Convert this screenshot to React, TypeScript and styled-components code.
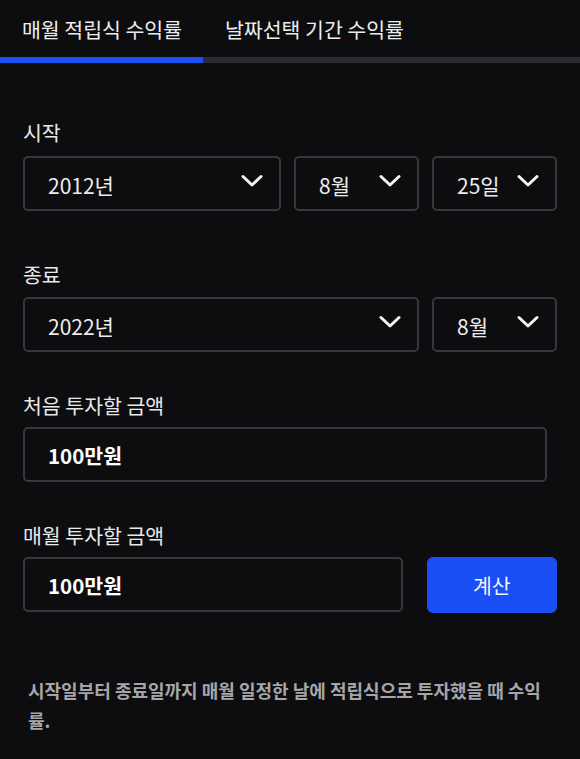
import React from 'react';
import styled, { createGlobalStyle } from 'styled-components';

const GlobalStyle = createGlobalStyle`
  html, body {
    margin: 0;
    padding: 0;
    background: #0d0d10;
  }
  body {
    font-family: "Noto Sans CJK KR", "Noto Sans", sans-serif;
    color: #e8e8ea;
  }
`;

const Page = styled.div`
  width: 580px;
  min-height: 759px;
  background: #0d0d10;
`;

const TabBar = styled.div`
  display: flex;
  height: 57px;
  align-items: center;
`;

const Tab = styled.div<{ $width?: number }>`
  width: ${(p) => (p.$width ? `${p.$width}px` : 'auto')};
  box-sizing: border-box;
  padding: 0 22px;
  font-size: 20.5px;
  line-height: 30px;
  color: #ececee;
  white-space: nowrap;
`;

const Track = styled.div`
  height: 6px;
  background: #2b2c32;
  display: flex;
`;

const Indicator = styled.div`
  width: 203px;
  background: #1d50f2;
`;

const Body = styled.div`
  padding: 54px 23px 0;
`;

const Label = styled.div<{ $gap?: number }>`
  font-size: 20.5px;
  line-height: 30px;
  color: #e8e8ea;
  margin-bottom: ${(p) => p.$gap ?? 9}px;
`;

const Section = styled.div<{ $top?: number }>`
  margin-top: ${(p) => p.$top ?? 0}px;
`;

const SelectRow = styled.div<{ $cols: string }>`
  display: grid;
  grid-template-columns: ${(p) => p.$cols};
  gap: 13px;
`;

const SelectBox = styled.div`
  height: 55px;
  box-sizing: border-box;
  border: 2px solid #38383c;
  border-radius: 5px;
  display: flex;
  align-items: center;
  justify-content: space-between;
  padding: 3px 16px 0 23px;
  font-size: 21px;
  color: #ececee;
`;

const Chevron = styled.svg`
  width: 22px;
  height: 14px;
  margin-top: -8px;
  flex-shrink: 0;
`;

const InputBox = styled.div<{ $width: number }>`
  width: ${(p) => p.$width}px;
  height: 55px;
  box-sizing: border-box;
  border: 2px solid #38383c;
  border-radius: 5px;
  display: flex;
  align-items: center;
  padding: 1px 0 0 23px;
  font-size: 20.5px;
  font-weight: 700;
  color: #ffffff;
`;

const AmountRow = styled.div`
  display: flex;
  gap: 24px;
`;

const CalcButton = styled.button`
  width: 131px;
  height: 56px;
  border: none;
  border-radius: 6px;
  background: #1a4ff5;
  color: #f2f4ff;
  font-family: inherit;
  font-size: 20.5px;
  cursor: pointer;
`;

const Description = styled.p`
  margin: 62px 0 0;
  padding: 0 12px 0 5px;
  font-size: 18px;
  font-weight: 700;
  line-height: 30px;
  color: #a6a6aa;
`;

const Select = ({ value }: { value: string }) => (
  <SelectBox>
    <span>{value}</span>
    <Chevron viewBox="0 0 22 14" fill="none">
      <path
        d="M2 2.5L11 11L20 2.5"
        stroke="#f4f4f6"
        strokeWidth="3"
        strokeLinecap="round"
        strokeLinejoin="round"
      />
    </Chevron>
  </SelectBox>
);

const App: React.FC = () => {
  return (
    <Page>
      <GlobalStyle />
      <TabBar>
        <Tab $width={203}>매월 적립식 수익률</Tab>
        <Tab>날짜선택 기간 수익률</Tab>
      </TabBar>
      <Track>
        <Indicator />
      </Track>

      <Body>
        <Section>
          <Label>시작</Label>
          <SelectRow $cols="1fr 125px 125px">
            <Select value="2012년" />
            <Select value="8월" />
            <Select value="25일" />
          </SelectRow>
        </Section>

        <Section $top={48}>
          <Label $gap={8}>종료</Label>
          <SelectRow $cols="1fr 125px">
            <Select value="2022년" />
            <Select value="8월" />
          </SelectRow>
        </Section>

        <Section $top={38}>
          <Label $gap={7}>처음 투자할 금액</Label>
          <InputBox $width={524}>100만원</InputBox>
        </Section>

        <Section $top={38}>
          <Label $gap={7}>매월 투자할 금액</Label>
          <AmountRow>
            <InputBox $width={381}>100만원</InputBox>
            <CalcButton>계산</CalcButton>
          </AmountRow>
        </Section>

        <Description>
          시작일부터 종료일까지 매월 일정한 날에 적립식으로 투자했을 때 수익률.
        </Description>
      </Body>
    </Page>
  );
};

export default App;
